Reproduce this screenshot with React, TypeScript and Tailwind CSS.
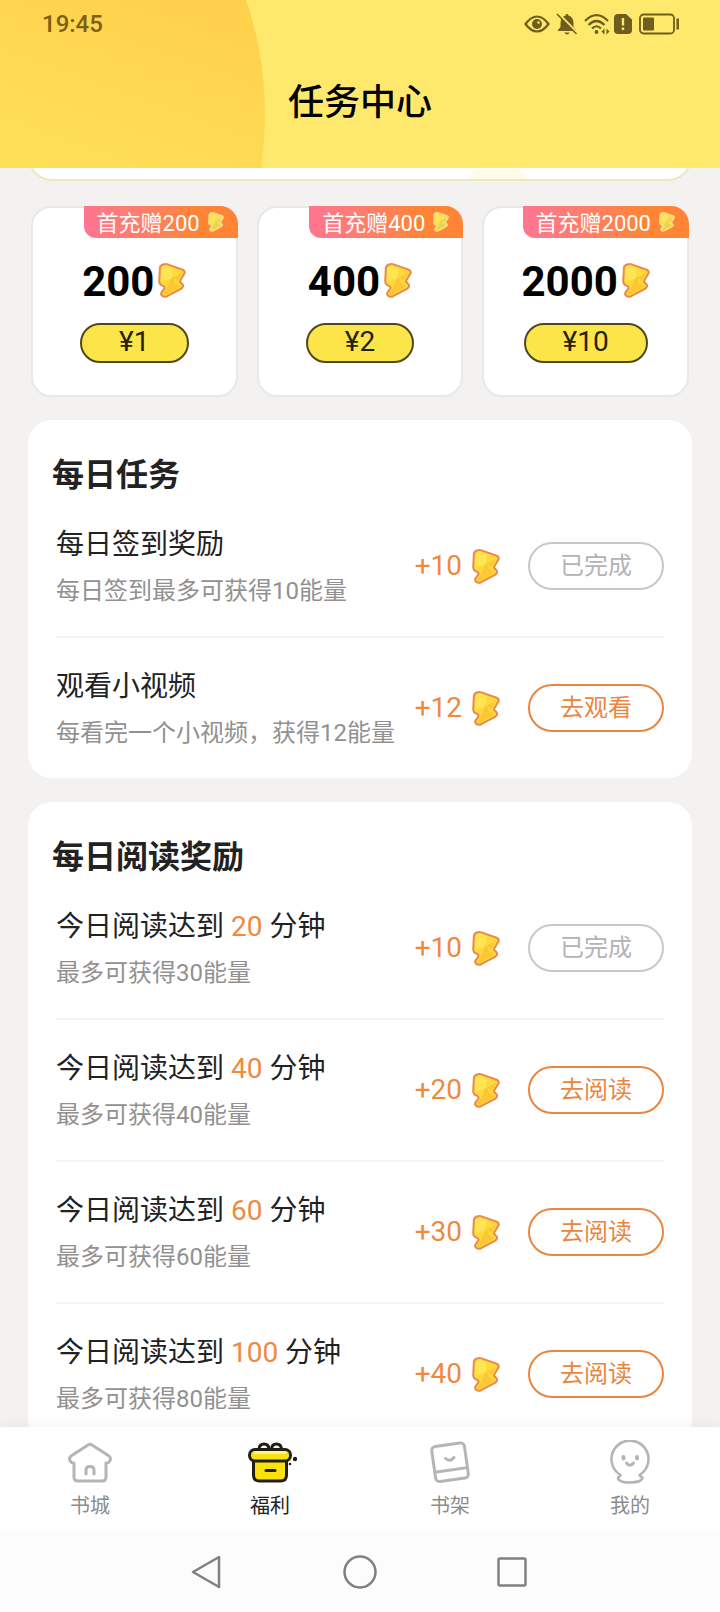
import type { ReactNode } from 'react';

interface RechargeOffer {
  bonus: number;
  amount: number;
  price: number;
}

interface Task {
  id: string;
  title: ReactNode;
  description: string;
  reward: number;
  action: string;
  done?: boolean;
}

const offers: RechargeOffer[] = [
  { bonus: 200, amount: 200, price: 1 },
  { bonus: 400, amount: 400, price: 2 },
  { bonus: 2000, amount: 2000, price: 10 },
];

const dailyTasks: Task[] = [
  { id: 'sign', title: '每日签到奖励', description: '每日签到最多可获得10能量', reward: 10, action: '已完成', done: true },
  { id: 'video', title: '观看小视频', description: '每看完一个小视频，获得12能量', reward: 12, action: '去观看' },
];

const readingTasks: Task[] = [
  { id: 'read20', title: <ReadingTitle minutes={20} />, description: '最多可获得30能量', reward: 10, action: '已完成', done: true },
  { id: 'read40', title: <ReadingTitle minutes={40} />, description: '最多可获得40能量', reward: 20, action: '去阅读' },
  { id: 'read60', title: <ReadingTitle minutes={60} />, description: '最多可获得60能量', reward: 30, action: '去阅读' },
  { id: 'read100', title: <ReadingTitle minutes={100} />, description: '最多可获得80能量', reward: 40, action: '去阅读' },
];

function ReadingTitle({ minutes }: { minutes: number }) {
  return (
    <>
      今日阅读达到 <span className="text-[#ee8a3f]">{minutes}</span> 分钟
    </>
  );
}

function EnergyIcon({ className, pale }: { className: string; pale?: boolean }) {
  return (
    <svg viewBox="0 0 82 104" className={className} aria-hidden="true">
      <path
        d="M5 14 Q7 6 16 4 Q22 2 28 4 L73 20 Q81 24 78 31 L66 51 Q64 55 67 58 L73 64 Q76 71 69 76 L28 98 Q15 104 9 94 Q8 91 10 87 L18 76 Q20 72 16 69 L8 65 Q3 61 3 54 Z"
        fill={pale ? '#f8df62' : '#fed93c'}
      />
      <path d="M10 14 L26 9 L44 20 L38 46 L8 54 Z" fill="#ffe552" />
      <path d="M72 27 L58 52 L44 46 L50 60 L66 69 L24 93 L14 92 L28 72 L38 46 L60 36 Z" fill={pale ? '#efd052' : '#fcc634'} />
      <path
        d="M5 14 Q7 6 16 4 Q22 2 28 4 L73 20 Q81 24 78 31 L66 51 Q64 55 67 58 L73 64 Q76 71 69 76 L28 98 Q15 104 9 94 Q8 91 10 87 L18 76 Q20 72 16 69 L8 65 Q3 61 3 54 Z"
        fill="none"
        stroke={pale ? '#f8e08a' : '#e98b4c'}
        strokeWidth="6"
        strokeLinejoin="round"
      />
    </svg>
  );
}

function StatusIcons() {
  return (
    <div className="flex items-center text-[#6e5d1c]">
      <svg viewBox="0 0 26 20" className="mr-1.5 h-5 w-[26px]" fill="none" aria-hidden="true">
        <path d="M1.5 10 Q7 2.5 13 2.5 T24.5 10 Q19 17.5 13 17.5 T1.5 10Z" stroke="currentColor" strokeWidth="2.2" />
        <circle cx="13" cy="10" r="5" fill="currentColor" />
        <circle cx="14.5" cy="8.5" r="1.3" fill="#ffe96c" />
      </svg>
      <svg viewBox="0 0 22 22" className="mr-1.5 size-[22px]" aria-hidden="true">
        <path d="M11 1 Q12.3 1 12.5 2.4 Q17.5 4 17.5 10 V14 L20 17 V18 H2 V17 L4.5 14 V10 Q4.5 4 9.5 2.4 Q9.7 1 11 1Z" fill="currentColor" />
        <path d="M8.5 19.5 H13.5 Q12.8 21.5 11 21.5 T8.5 19.5Z" fill="currentColor" />
        <path d="M2.7 0.5 L22 20.5" stroke="#ffe96c" strokeWidth="2" />
        <path d="M1 1 L20.5 21" stroke="currentColor" strokeWidth="1.5" />
      </svg>
      <svg viewBox="0 0 26 22" className="mr-1 h-[22px] w-[26px]" fill="none" stroke="currentColor" strokeWidth="2.2" aria-hidden="true">
        <path d="M1 8 Q12.5 -3.5 24 8" />
        <path d="M4.5 12 Q12.5 4 20.5 12" />
        <path d="M8 15.5 Q12.5 11 17 15.5" />
        <circle cx="12.5" cy="19" r="1.9" fill="currentColor" stroke="none" />
        <path d="M20.5 15.5 V21.5 L17.5 18.5Z M22.5 15.5 V21.5 L25.5 18.5Z" fill="currentColor" stroke="none" />
      </svg>
      <svg viewBox="0 0 18 20" className="mr-[7px] h-5 w-[18px]" aria-hidden="true">
        <path d="M4 0 H12 L18 5.5 V16 Q18 20 14 20 H4 Q0 20 0 16 V4 Q0 0 4 0Z" fill="currentColor" />
        <path d="M9 4 V11.5 M9 13.5 V16" stroke="#ffe96c" strokeWidth="2.4" />
      </svg>
      <svg viewBox="0 0 41 22" className="h-[22px] w-[41px]" fill="none" aria-hidden="true">
        <rect x="1" y="1.5" width="34" height="19" rx="3.5" stroke="currentColor" strokeWidth="1.8" />
        <rect x="4" y="4.5" width="11" height="13" rx="1" fill="currentColor" />
        <path d="M38.7 5.5 V16.5" stroke="currentColor" strokeWidth="2.5" />
      </svg>
    </div>
  );
}

function Header() {
  return (
    <header className="relative h-[168px] shrink-0 overflow-hidden bg-[#ffe96c]">
      <svg className="absolute inset-0 size-full" aria-hidden="true">
        <defs>
          <linearGradient id="sun" gradientUnits="userSpaceOnUse" x1="160" y1="0" x2="100" y2="168">
            <stop offset="0" stopColor="#ffd14d" />
            <stop offset="1" stopColor="#fedf57" />
          </linearGradient>
        </defs>
        <circle cx="-95" cy="115" r="360" fill="url(#sun)" />
      </svg>
      <div className="relative flex h-12 items-center justify-between pl-[42px] pr-10">
        <span className="text-[24px] font-medium text-[#7d5f13]">19:45</span>
        <StatusIcons />
      </div>
      <h1 className="relative mt-7 text-center text-[36px] font-medium leading-[54px] text-black">任务中心</h1>
    </header>
  );
}

function BannerEdge() {
  return (
    <div className="flex h-[13px] shrink-0 items-end overflow-hidden">
      <div className="flex h-16 flex-1 items-end overflow-hidden rounded-b-[24px] border-2 border-[#efe6c2] bg-white">
        <div className="ml-[440px] h-2.5 w-14 rounded-t-full bg-[#fffbe6]" />
      </div>
    </div>
  );
}

function OfferCard({ offer }: { offer: RechargeOffer }) {
  return (
    <article className="relative flex h-[191px] flex-col items-center rounded-[20px] border-2 border-[#e9e8e7] bg-white pt-[50px]">
      <div className="absolute -right-0.5 -top-0.5 flex h-8 items-center gap-2 rounded-bl-xl rounded-tr-[18px] bg-linear-to-r from-[#ff7591] to-[#ff8436] to-70% pl-[13px] pr-[14px] text-[22px] text-white">
        <span className="pt-[3px]">首充赠{offer.bonus}</span>
        <EnergyIcon pale className="h-5 w-4" />
      </div>
      <p className="flex items-center gap-1 text-[42px] font-bold leading-[48px] text-black">
        {offer.amount}
        <EnergyIcon className="mb-1 h-[35px] w-7" />
      </p>
      <button type="button" className="mt-[17px] h-10 rounded-full border-2 border-[#4f481f] bg-[#fce548] px-[37px] pb-0.5 text-[28px] leading-8 text-[#24210f]">
        ¥{offer.price}
      </button>
    </article>
  );
}

function TaskRow({ task }: { task: Task }) {
  return (
    <li className="flex h-[142px] items-center border-b-2 border-[#f3f3f3] last:h-[140px] last:border-b-0">
      <div className="min-w-0 flex-1 whitespace-nowrap pt-1">
        <h3 className="text-[28px] leading-[47px] text-[#222]">{task.title}</h3>
        <p className="text-[24px] leading-[47px] text-[#919191]">{task.description}</p>
      </div>
      <span className="text-[28px] text-[#ee8a3f]">+{task.reward}</span>
      <EnergyIcon className="ml-2.5 mr-7 h-[35px] w-7" />
      <button
        type="button"
        disabled={task.done}
        className={`h-12 w-[136px] rounded-full border-2 text-[24px] leading-none ${
          task.done ? 'border-[#c8c8c8] text-[#b3b3b3]' : 'border-[#ea8540] text-[#ea8540]'
        }`}
      >
        {task.action}
      </button>
    </li>
  );
}

function TaskSection({ title, tasks }: { title: string; tasks: Task[] }) {
  return (
    <section className="shrink-0 rounded-3xl bg-white pt-[34px]">
      <h2 className="px-6 text-[32px] font-bold leading-[42px] text-[#222]">{title}</h2>
      <ul className="mx-7">
        {tasks.map((task) => (
          <TaskRow key={task.id} task={task} />
        ))}
      </ul>
    </section>
  );
}

function HomeIcon() {
  return (
    <svg viewBox="0 0 48 48" className="size-12" fill="none" stroke="#b5b5b5" strokeWidth="3" strokeLinejoin="round" strokeLinecap="round" aria-hidden="true">
      <path d="M22 5 Q24 3.5 26 5 L43 16 Q46 19 43 22 Q41 23.5 40 23 V37 Q40 41 36 41 H12 Q8 41 8 37 V23 Q7 23.5 5 22 Q2 19 5 16 Z" />
      <path d="M20 34 V30 Q20 26.5 24 26.5 T28 30 V34" />
    </svg>
  );
}

function GiftIcon() {
  return (
    <svg viewBox="0 0 48 48" className="size-12 overflow-visible" fill="#fbe20d" stroke="#211f12" strokeWidth="3" strokeLinejoin="round" strokeLinecap="round" aria-hidden="true">
      <path d="M13 9 Q13.5 4 18 4 T23 9" fill="white" />
      <path d="M25.500 9 Q26 4 30.500 4 T35.500 9" fill="white" />
      <path d="M7.500 19 H40.500 V35 Q40.500 41 34.500 41 H13.500 Q7.500 41 7.500 35 Z" />
      <rect x="3.500" y="9.500" width="41" height="11.500" rx="5.500" />
      <path d="M9 12.500 H39" stroke="#fff3a0" strokeWidth="2.500" />
      <path d="M20 30.500 H29" />
      <circle cx="49" cy="19" r="2.200" fill="#211f12" stroke="none" />
      <circle cx="44" cy="24" r="1.300" fill="#211f12" stroke="none" />
    </svg>
  );
}

function ShelfIcon() {
  return (
    <svg viewBox="0 0 48 48" className="size-12" fill="none" stroke="#b5b5b5" strokeWidth="3" strokeLinejoin="round" strokeLinecap="round" aria-hidden="true">
      <g transform="rotate(-8 24 22)">
        <rect x="7.500" y="4.500" width="33" height="35.500" rx="4" />
        <path d="M7.500 30 H40.500" />
      </g>
      <path d="M19.500 18.500 Q24 22.500 28 17.500" />
    </svg>
  );
}

function ProfileIcon() {
  return (
    <svg viewBox="0 0 48 48" className="size-12" fill="none" stroke="#b5b5b5" strokeWidth="2.6" strokeLinejoin="round" strokeLinecap="round" aria-hidden="true">
      <path d="M14.500 35 A18.500 18.500 0 1 1 33.500 35 Q34 36.500 36.500 37.500 Q36 42.500 24 42.500 T12 37.500 Q14 36.500 14.500 35 Z" />
      <path d="M17.500 17 V18.500 M31 17 V18.500" strokeWidth="4" />
      <path d="M20.500 23 Q24 27.500 27.500 23" strokeWidth="3" />
    </svg>
  );
}

const tabs = [
  { label: '书城', icon: <HomeIcon /> },
  { label: '福利', icon: <GiftIcon />, active: true },
  { label: '书架', icon: <ShelfIcon /> },
  { label: '我的', icon: <ProfileIcon /> },
];

function TabBar() {
  return (
    <nav className="relative grid h-[104px] shrink-0 grid-cols-4 bg-white shadow-[0_-2px_14px_rgba(0,0,0,0.05)]">
      {tabs.map((tab) => (
        <button
          key={tab.label}
          type="button"
          className={`flex flex-col items-center pt-[13px] text-[20px] leading-[36px] ${tab.active ? 'text-[#222]' : 'text-[#8c8c8c]'}`}
        >
          {tab.icon}
          {tab.label}
        </button>
      ))}
    </nav>
  );
}

function SystemBar() {
  return (
    <div className="relative flex h-[81px] shrink-0 items-center justify-center gap-[118px] bg-[#fcfcfc]">
      <button type="button" aria-label="返回">
        <svg viewBox="0 0 34 34" className="size-[34px]" fill="none" stroke="#808080" strokeWidth="2.5" strokeLinejoin="round">
          <path d="M2 17 L28 2 V32 Z" />
        </svg>
      </button>
      <button type="button" aria-label="主屏幕">
        <svg viewBox="0 0 34 34" className="size-[34px]" fill="none" stroke="#808080" strokeWidth="2.5">
          <circle cx="17" cy="17" r="15.5" />
        </svg>
      </button>
      <button type="button" aria-label="最近任务">
        <svg viewBox="0 0 34 34" className="size-[34px]" fill="none" stroke="#808080" strokeWidth="2.5">
          <rect x="3.500" y="3.500" width="27" height="27" rx="1.500" />
        </svg>
      </button>
    </div>
  );
}

export default function App() {
  return (
    <div className="flex h-screen flex-col overflow-hidden bg-[#f4f2f0] font-[Roboto,'Noto_Sans_CJK_SC',sans-serif]">
      <Header />
      <main className="flex min-h-0 flex-1 flex-col overflow-hidden px-7">
        <BannerEdge />
        <div className="mt-[25px] grid shrink-0 grid-cols-3 gap-[19px] px-[3px]">
          {offers.map((offer) => (
            <OfferCard key={offer.amount} offer={offer} />
          ))}
        </div>
        <div className="mt-[23px] flex flex-col gap-6">
          <TaskSection title="每日任务" tasks={dailyTasks} />
          <TaskSection title="每日阅读奖励" tasks={readingTasks} />
        </div>
      </main>
      <TabBar />
      <SystemBar />
    </div>
  );
}
